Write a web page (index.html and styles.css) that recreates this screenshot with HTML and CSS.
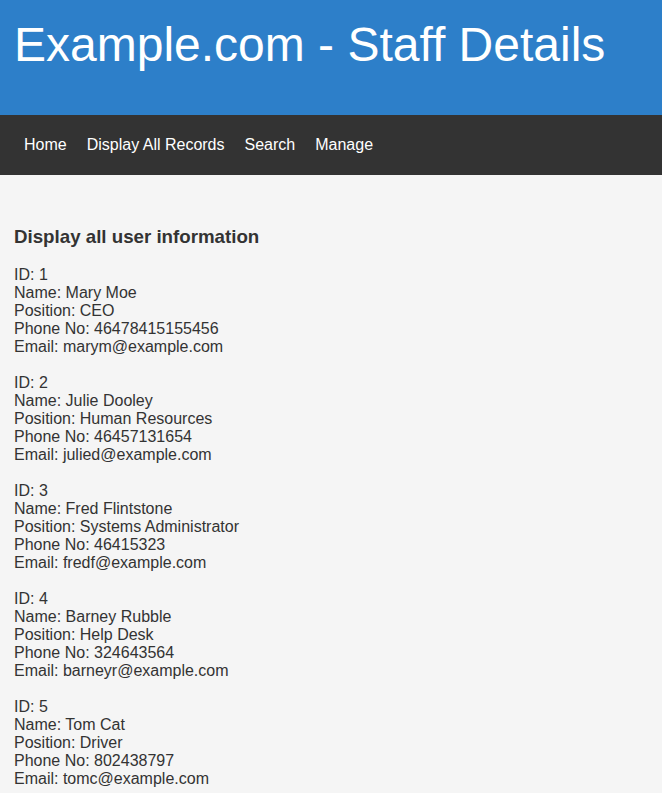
FILE: index.html
```html
<!DOCTYPE html>
<html>
<head>
<meta charset="utf-8">
<title>Example.com - Staff Details</title>
<link rel="stylesheet" href="styles.css">
</head>
<body>
<header class="site-header">
  <h1 class="site-title">Example.com - Staff Details</h1>
</header>
<nav class="site-nav">
  <a href="#">Home</a>
  <a href="#">Display All Records</a>
  <a href="#">Search</a>
  <a href="#">Manage</a>
</nav>
<main class="content">
  <h3 class="section-title">Display all user information</h3>
  <div class="records">
    <p class="record">ID: 1<br>Name: Mary Moe<br>Position: CEO<br>Phone No: 46478415155456<br>Email: marym@example.com</p>
    <p class="record">ID: 2<br>Name: Julie Dooley<br>Position: Human Resources<br>Phone No: 46457131654<br>Email: julied@example.com</p>
    <p class="record">ID: 3<br>Name: Fred Flintstone<br>Position: Systems Administrator<br>Phone No: 46415323<br>Email: fredf@example.com</p>
    <p class="record">ID: 4<br>Name: Barney Rubble<br>Position: Help Desk<br>Phone No: 324643564<br>Email: barneyr@example.com</p>
    <p class="record">ID: 5<br>Name: Tom Cat<br>Position: Driver<br>Phone No: 802438797<br>Email: tomc@example.com</p>
  </div>
</main>
</body>
</html>
```
FILE: styles.css
```css
html, body {
  margin: 0;
  padding: 0;
}
body {
  background: #f5f5f5;
  color: #333333;
  font-family: "Liberation Sans", Arial, sans-serif;
  font-size: 16px;
}
.site-header {
  background: #2d7fc9;
  height: 115px;
  box-sizing: border-box;
  padding: 17px 14px 0;
}
.site-title {
  margin: 0;
  color: #ffffff;
  font-size: 48px;
  font-weight: normal;
  line-height: 55px;
}
.site-nav {
  background: #333333;
  height: 60px;
  display: flex;
  align-items: center;
  padding: 0 4px 0 14px;
}
.site-nav a {
  color: #ffffff;
  text-decoration: none;
  font-size: 16px;
  padding: 0 10px;
  line-height: 18px;
}
.content {
  padding: 51px 14px 0;
}
.section-title {
  margin: 0 0 18px;
  font-size: 18.72px;
  font-weight: bold;
  line-height: 21.5px;
}
.records {
  display: flex;
  flex-direction: column;
  gap: 18px;
}
.record {
  margin: 0;
  line-height: 18px;
}
```
